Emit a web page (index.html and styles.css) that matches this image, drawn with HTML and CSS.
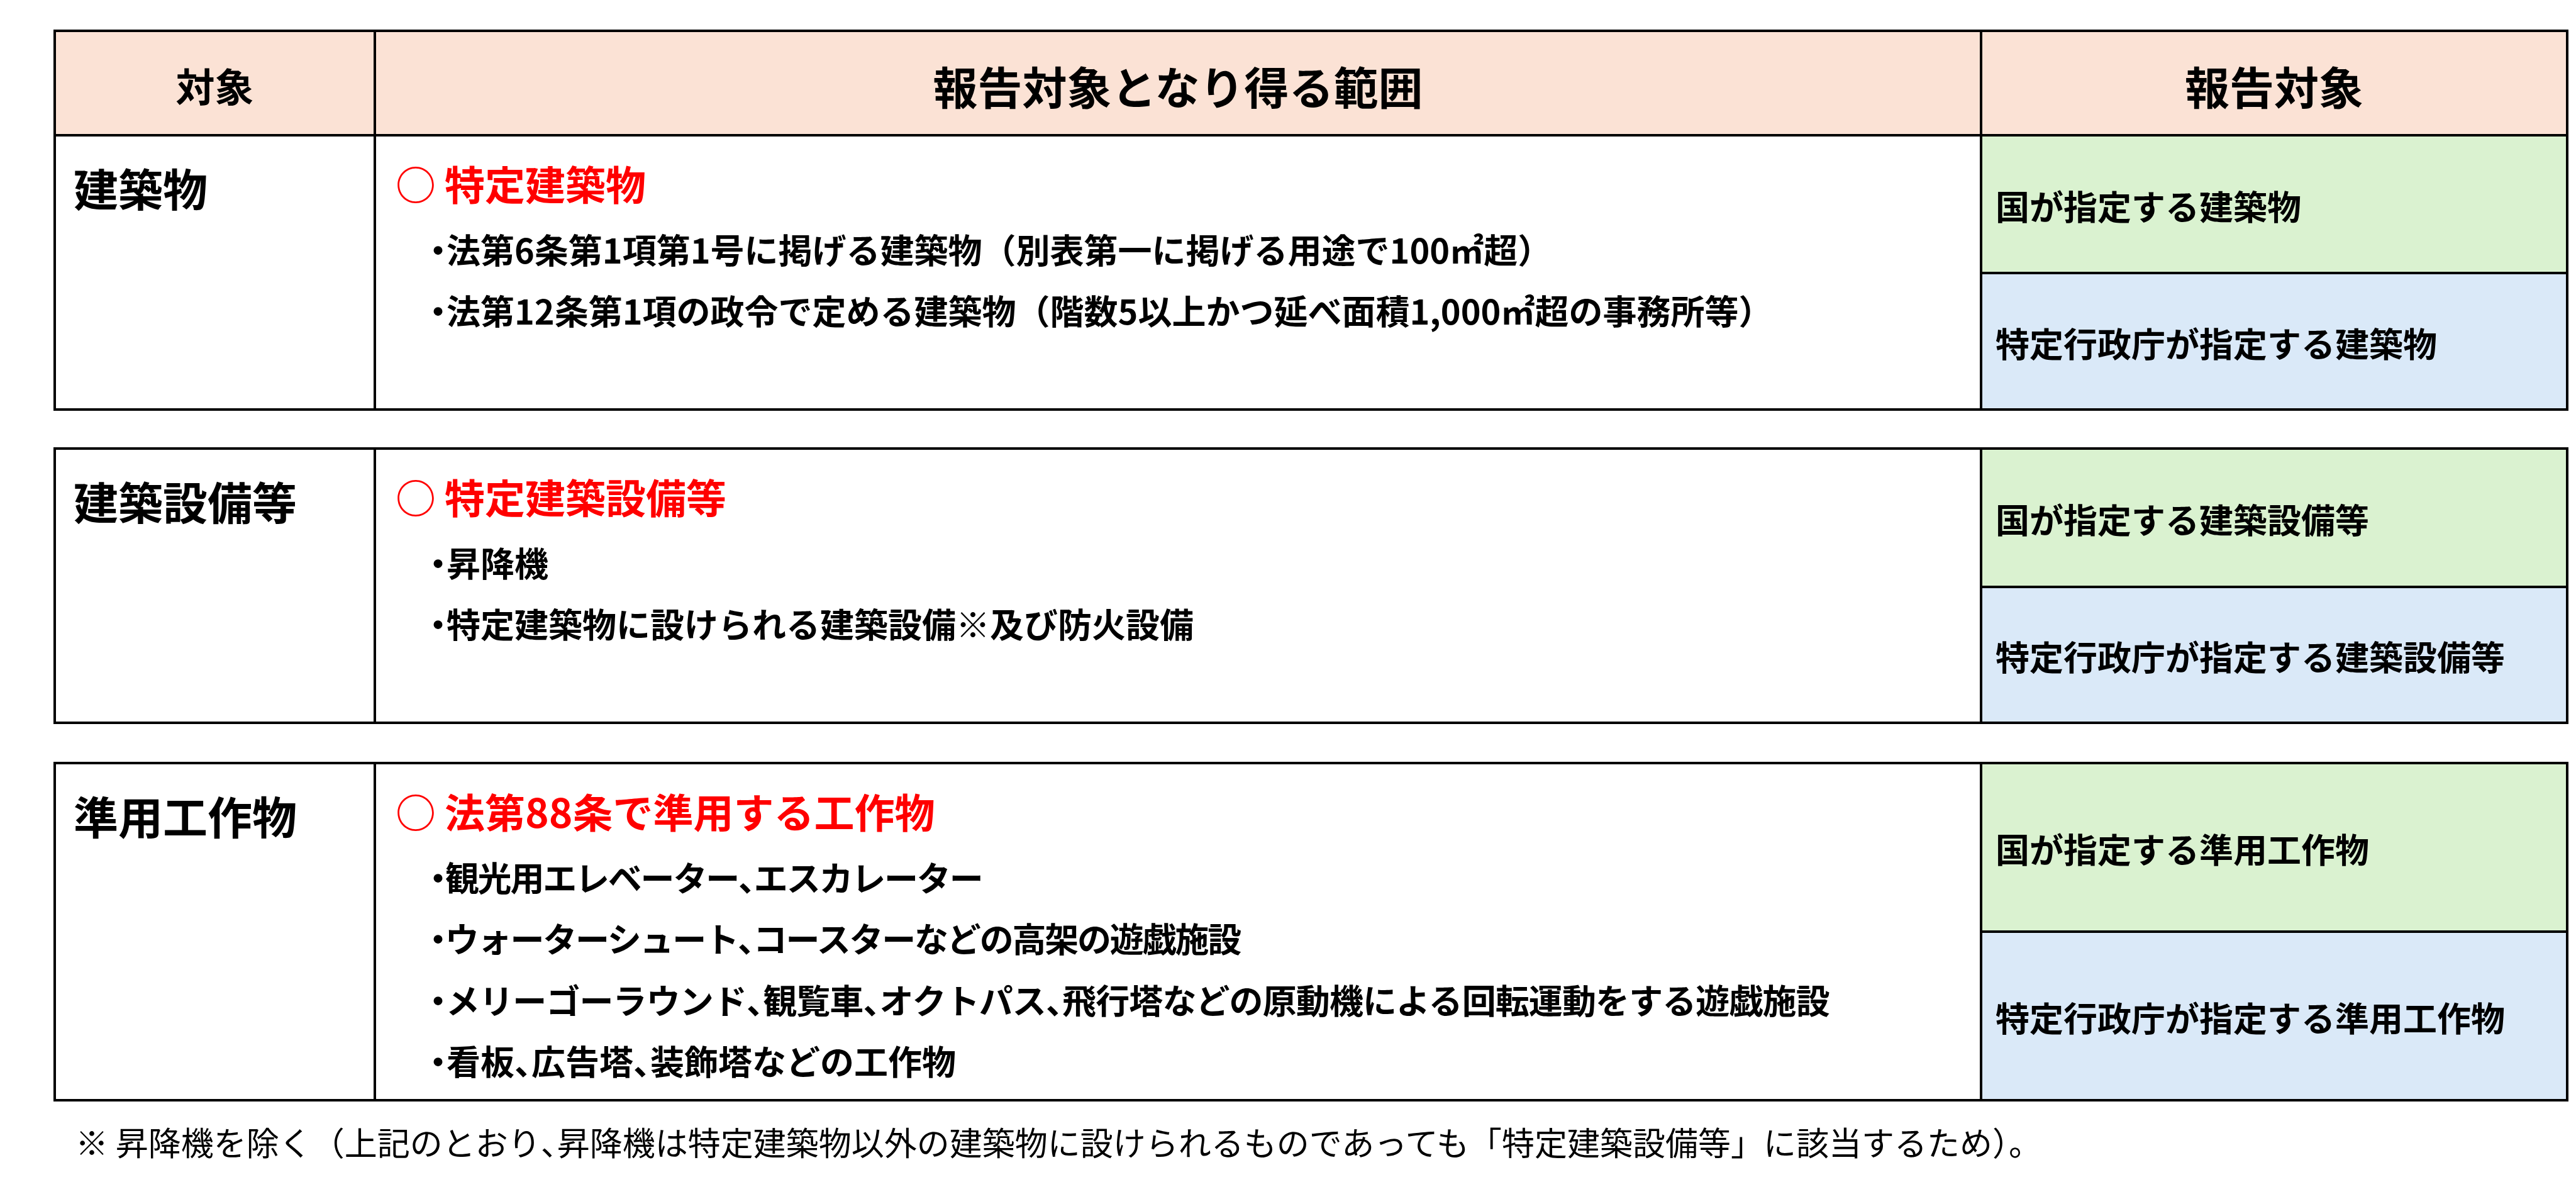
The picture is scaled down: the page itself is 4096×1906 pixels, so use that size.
FILE: index.html
```html
<!DOCTYPE html>
<html lang="ja">
<head>
<meta charset="utf-8">
<title>報告対象となり得る範囲</title>
<link rel="stylesheet" href="styles.css">
</head>
<body>
<div class="page">

  <section class="block block-first">
    <div class="hcell hcell-small">対象</div>
    <div class="hcell">報告対象となり得る範囲</div>
    <div class="hcell">報告対象</div>

    <div class="label">建築物</div>
    <div class="range">
      <div class="range-title"><span class="mark">○</span>特定建築物</div>
      <ul class="items">
        <li><span class="dot">・</span>法第6条第1項第1号に掲げる建築物（別表第一に掲げる用途で100㎡超）</li>
        <li><span class="dot">・</span>法第12条第1項の政令で定める建築物（階数5以上かつ延べ面積1,000㎡超の事務所等）</li>
      </ul>
    </div>
    <div class="targets targets-first">
      <div class="target target-national">国が指定する建築物</div>
      <div class="target target-local">特定行政庁が指定する建築物</div>
    </div>
  </section>

  <section class="block block-second">
    <div class="label">建築設備等</div>
    <div class="range">
      <div class="range-title"><span class="mark">○</span>特定建築設備等</div>
      <ul class="items">
        <li><span class="dot">・</span>昇降機</li>
        <li><span class="dot">・</span>特定建築物に設けられる建築設備※及び防火設備</li>
      </ul>
    </div>
    <div class="targets targets-second">
      <div class="target target-national">国が指定する建築設備等</div>
      <div class="target target-local">特定行政庁が指定する建築設備等</div>
    </div>
  </section>

  <section class="block block-third">
    <div class="label">準用工作物</div>
    <div class="range">
      <div class="range-title"><span class="mark">○</span>法第88条で準用する工作物</div>
      <ul class="items">
        <li class="tight"><span class="dot">・</span>観光用エレベーター<span class="p">、</span>エスカレーター</li>
        <li class="tight"><span class="dot">・</span>ウォーターシュート<span class="p">、</span>コースターなどの高架の遊戯施設</li>
        <li class="snug"><span class="dot">・</span>メリーゴーラウンド<span class="p">、</span>観覧車<span class="p">、</span>オクトパス<span class="p">、</span>飛行塔などの原動機による回転運動をする遊戯施設</li>
        <li><span class="dot">・</span>看板<span class="p">、</span>広告塔<span class="p">、</span>装飾塔などの工作物</li>
      </ul>
    </div>
    <div class="targets targets-third">
      <div class="target target-national">国が指定する準用工作物</div>
      <div class="target target-local">特定行政庁が指定する準用工作物</div>
    </div>
  </section>

  <p class="note">※ 昇降機を除く（上記のとおり<span class="p">、</span>昇降機は特定建築物以外の建築物に設けられるものであっても「特定建築設備等」に該当するため）。</p>

</div>
</body>
</html>
```

FILE: styles.css
```css
html, body {
  margin: 0;
  padding: 0;
  background: #ffffff;
}

body {
  font-family: "Noto Sans CJK JP", "Noto Sans", sans-serif;
  color: #000000;
}

.page {
  padding: 47px 0 0 85px;
}

.block {
  display: grid;
  grid-template-columns: 505px 2550px 928px;
  column-gap: 4px;
  row-gap: 4px;
  width: 3991px;
  border: 4px solid #000000;
  background: #000000;
}

.block-first {
  grid-template-rows: 162px 432px;
}

.block-second {
  grid-template-rows: 432px;
  margin-top: 58px;
}

.block-third {
  grid-template-rows: 532px;
  margin-top: 60px;
}

.hcell {
  display: flex;
  align-items: center;
  justify-content: center;
  box-sizing: border-box;
  padding-top: 6px;
  background: #FBE2D5;
  font-size: 71px;
  font-weight: 700;
  line-height: 90px;
}

.hcell-small {
  font-size: 62px;
}

.label {
  background: #ffffff;
  box-sizing: border-box;
  padding: 35px 0 0 28px;
  font-size: 71px;
  font-weight: 700;
  line-height: 90px;
}

.range {
  background: #ffffff;
  box-sizing: border-box;
  padding: 33px 0 0 31px;
}

.range-title {
  color: #FF0000;
  font-size: 64px;
  font-weight: 700;
  line-height: 80px;
}

.mark {
  margin-right: 14px;
}

.items {
  list-style: none;
  margin: 17px 0 0 0;
  padding: 0 0 0 54px;
}

.items li {
  font-size: 54px;
  font-weight: 700;
  line-height: 97.3px;
  white-space: nowrap;
}

.items li.tight {
  letter-spacing: -2.2px;
}

.items li.snug {
  letter-spacing: -0.9px;
}

.dot {
  font-feature-settings: "halt";
}

.p {
  font-feature-settings: "halt";
}

.targets {
  display: grid;
  row-gap: 4px;
  background: #000000;
}

.targets-first {
  grid-template-rows: 215px 213px;
}

.targets-second {
  grid-template-rows: 216px 212px;
}

.targets-third {
  grid-template-rows: 264px 264px;
}

.target {
  display: flex;
  align-items: center;
  box-sizing: border-box;
  padding: 4px 0 0 21px;
  font-size: 54px;
  font-weight: 700;
  line-height: 70px;
  white-space: nowrap;
}

.target-national {
  background: #DAF2D0;
}

.target-local {
  background: #DAE9F8;
}

.note {
  margin: 34px 0 0 0;
  padding-left: 35px;
  font-size: 52px;
  font-weight: 400;
  line-height: 60px;
  white-space: nowrap;
}
```
